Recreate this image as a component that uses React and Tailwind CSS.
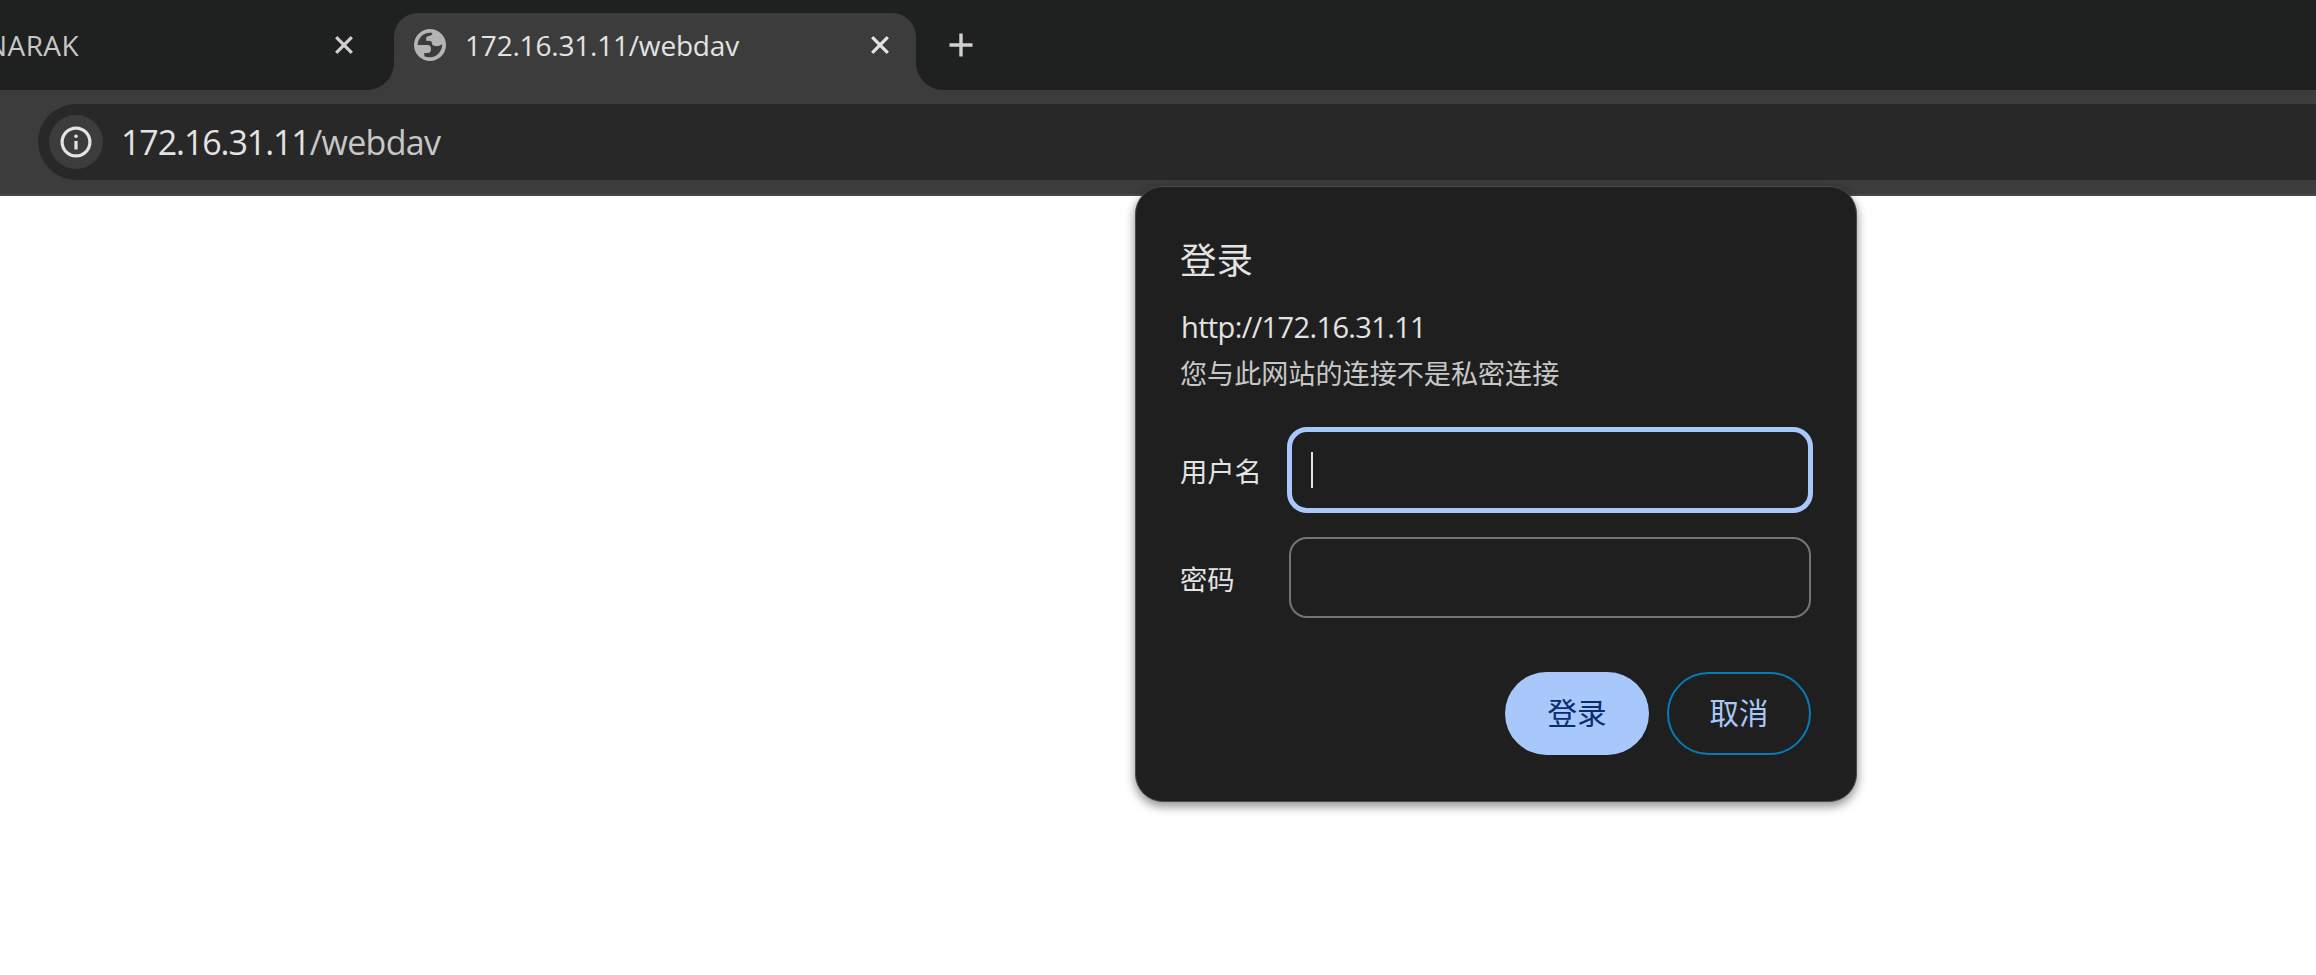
function CloseIcon({ className }) {
  return (
    <svg viewBox="0 0 18 18" className={className} fill="none" stroke="currentColor" strokeWidth="3.2">
      <path d="M1.2 1.2 16.8 16.8M16.8 1.2 1.2 16.8" />
    </svg>
  );
}

function GlobeIcon() {
  return (
    <svg viewBox="0 0 32 32" className="size-8 shrink-0">
      <circle cx="16" cy="16" r="16" fill="#b4b4b4" />
      <path
        fill="#3c3c3c"
        d="M18.3 3.8C18.3 6 17 7 13.8 7.2L12.2 8.6V11.8L16.2 12C17.8 12.2 18 14 18.3 15.8C21 18 25 17.5 28.2 15.3C28.4 22 23 28.3 16 28.3C14 28.3 12 28 10.3 27.2V24H13.8C15.8 24 17 22.6 17 20C17 17.4 15.8 16 13.4 16H3.7C3.7 9.2 9.2 3.7 16 3.7Z"
      />
    </svg>
  );
}

function TabStrip() {
  return (
    <div className="flex h-[90px] items-end bg-[#1f2120]">
      <div className="flex h-full w-[394px] shrink-0 bg-[#3c3c3c]">
        <div className="flex h-full w-full items-center justify-between rounded-br-[27px] bg-[#1f2120] pr-[41px]">
          <span className="-ml-[14px] text-[28px] leading-none tracking-[0.015em] text-[#c7c7c7]">NARAK</span>
          <CloseIcon className="size-[18px] text-[#d0d0d0]" />
        </div>
      </div>
      <div className="flex h-full w-[522px] shrink-0 items-end">
        <div className="flex h-[77px] w-full items-start rounded-t-[24px] bg-[#3c3c3c] pt-4 pr-[27px] pl-5">
          <GlobeIcon />
          <span className="ml-[19px] flex-1 text-[28px] leading-8 tracking-[-0.007em] whitespace-nowrap text-[#e3e3e3]">
            172.16.31.11/webdav
          </span>
          <CloseIcon className="mt-[7px] size-[18px] text-[#e3e3e3]" />
        </div>
      </div>
      <div className="flex h-full flex-1 bg-[#3c3c3c]">
        <div className="flex h-full w-full items-center rounded-bl-[27px] bg-[#1f2120] pl-[33px]">
          <svg viewBox="0 0 24 24" className="size-6 text-[#d0d0d0]" fill="none" stroke="currentColor" strokeWidth="3.4">
            <path d="M12 .5v23M.5 12h23" />
          </svg>
        </div>
      </div>
    </div>
  );
}

function Toolbar() {
  return (
    <div className="flex h-[106px] items-start border-b-2 border-[#484848] bg-[#3c3c3c] pt-[14px] pl-[38px]">
      <div className="flex h-[76px] flex-1 items-center rounded-l-full bg-[#282828] pl-[11px]">
        <div className="flex size-[54px] items-center justify-center rounded-full bg-[#3c3c3c]">
          <svg viewBox="0 0 32 32" className="size-8" fill="none" stroke="#e3e3e3" strokeWidth="3.2">
            <circle cx="16" cy="16" r="13.9" />
            <path d="M16 15v8.5" />
            <circle cx="16" cy="10.3" r="1.8" fill="#e3e3e3" stroke="none" />
          </svg>
        </div>
        <span className="ml-[18px] text-[34px] leading-none tracking-[-0.032em] whitespace-nowrap text-[#e3e3e3]">
          172.16.31.11<span className="tracking-[-0.02em] text-[#c7c7c7]">/webdav</span>
        </span>
      </div>
    </div>
  );
}

function LoginDialog() {
  return (
    <div className="absolute top-[186px] left-[1135px] flex h-[616px] w-[722px] flex-col rounded-[28px] border border-[#4a4a4a] bg-[#1f1f1f] pr-[45px] pl-11 shadow-[0_4px_10px_1px_rgba(0,0,0,0.4)]">
      <h1 className="mt-[53px] text-[36.5px] leading-10 text-[#e3e3e3]">登录</h1>
      <p className="mt-[29px] pl-px text-[29px] leading-9 tracking-[-0.022em] text-[#e3e3e3]">http://172.16.31.11</p>
      <p className="mt-[11px] text-[27.1px] leading-9 text-[#c7c7c7]">您与此网站的连接不是私密连接</p>
      <div className="-mr-[2px] mt-[35px] flex h-[86px] items-center justify-between">
        <label className="pt-[3px] text-[27.3px] leading-9 text-[#e3e3e3]">用户名</label>
        <div className="flex h-[86px] w-[526px] shrink-0 items-center rounded-[20px] border-[5px] border-[#a8c7fa] pl-[19px]">
          <div className="h-9 w-[2px] bg-[#e3e3e3]" />
        </div>
      </div>
      <div className="mt-6 flex h-[81px] items-center justify-between">
        <label className="pt-[4px] text-[27.3px] leading-9 text-[#e3e3e3]">密码</label>
        <div className="h-[81px] w-[522px] shrink-0 rounded-[18px] border-2 border-[#757575]" />
      </div>
      <div className="mt-[54px] flex justify-end gap-[18px]">
        <button className="h-[83px] w-36 rounded-full bg-[#a8c7fa] text-[29.5px] text-[#062e6f]">登录</button>
        <button className="h-[83px] w-36 rounded-full border-2 border-[#047db7] text-[29.5px] text-[#a8c7fa]">取消</button>
      </div>
    </div>
  );
}

export default function App() {
  return (
    <div className="relative h-[975px] w-[2316px] overflow-hidden bg-white font-['Open_Sans','Noto_Sans_CJK_SC',sans-serif]">
      <TabStrip />
      <Toolbar />
      <LoginDialog />
    </div>
  );
}
